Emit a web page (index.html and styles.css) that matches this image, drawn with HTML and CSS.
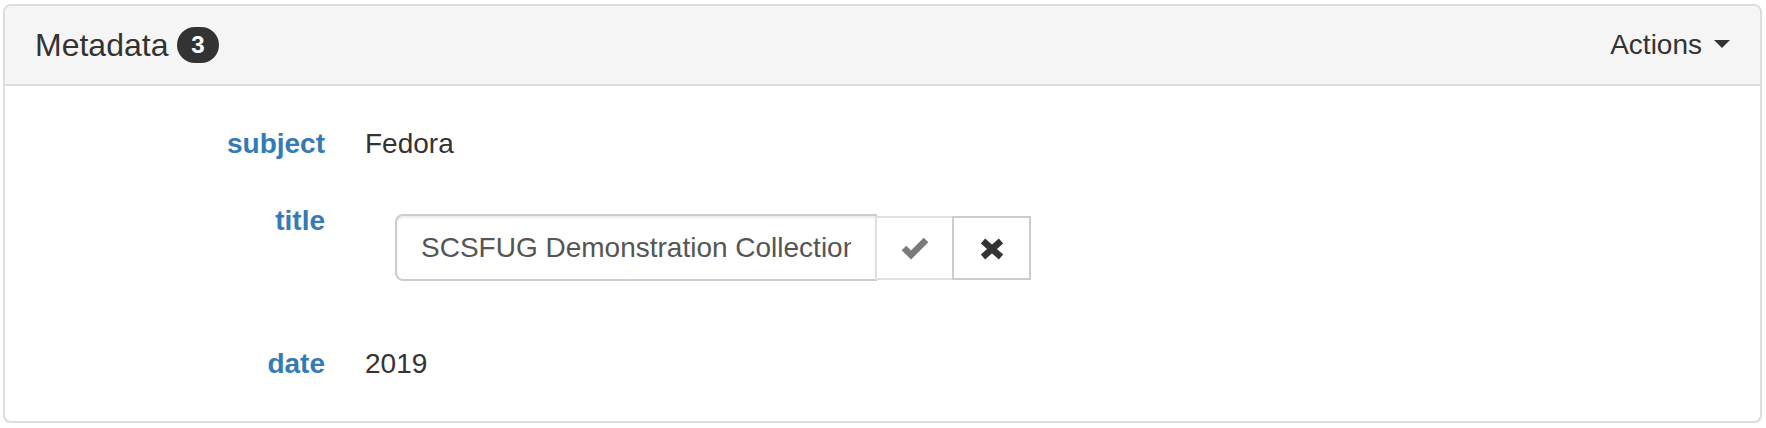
FILE: index.html
```html
<!DOCTYPE html>
<html lang="en">
<head>
<meta charset="utf-8">
<title>Metadata</title>
<link rel="stylesheet" href="styles.css">
</head>
<body>
<div class="panel">
  <div class="panel-heading">
    <h3 class="panel-title">Metadata <span class="badge">3</span></h3>
    <div class="actions">Actions<span class="caret"></span></div>
  </div>
  <div class="panel-body">
    <div class="row row-subject">
      <div class="term">subject</div>
      <div class="desc">Fedora</div>
    </div>
    <div class="row row-title">
      <div class="term">title</div>
      <div class="desc">
        <form class="edit-form">
          <input class="text-input" type="text" value="SCSFUG Demonstration Collection">
          <button class="btn btn-ok" type="button" disabled aria-label="Save">
            <svg class="icon-ok" viewBox="0 0 28 23" width="28" height="23"><polyline points="3,11 10,18 25,3" fill="none" stroke="#7a7a7a" stroke-width="6.5" stroke-linejoin="miter" stroke-linecap="butt"/></svg>
          </button>
          <button class="btn btn-remove" type="button" aria-label="Cancel">
            <svg class="icon-remove" viewBox="0 0 24 22" width="24" height="22"><path d="M3 3 L21 19 M21 3 L3 19" fill="none" stroke="#333" stroke-width="6.5" stroke-linecap="butt"/></svg>
          </button>
        </form>
      </div>
    </div>
    <div class="row row-date">
      <div class="term">date</div>
      <div class="desc">2019</div>
    </div>
  </div>
</div>
</body>
</html>
```

FILE: styles.css
```css
html, body {
  margin: 0;
  padding: 0;
  background: #fff;
}

body {
  font-family: "Liberation Sans", Arial, Helvetica, sans-serif;
  font-size: 28px;
  line-height: 40px;
  color: #333;
}

.panel {
  margin: 4px 4px 0 3px;
  border: 2px solid #ddd;
  border-radius: 8px;
  background: #fff;
  box-shadow: 0 2px 2px rgba(0, 0, 0, 0.05);
}

.panel-heading {
  display: flex;
  align-items: center;
  justify-content: space-between;
  height: 78px;
  padding: 0 30px;
  background: #f5f5f5;
  border-bottom: 2px solid #ddd;
  border-radius: 6px 6px 0 0;
}

.panel-title {
  margin: 0;
  font-size: 32px;
  line-height: 36px;
  font-weight: normal;
  color: #333;
}

.badge {
  display: inline-block;
  vertical-align: middle;
  padding: 6px 14px;
  font-size: 24px;
  line-height: 24px;
  font-weight: bold;
  color: #fff;
  background: #333;
  border-radius: 20px;
  margin-top: -4px;
}

.actions {
  font-size: 28px;
  line-height: 40px;
  color: #333;
}

.caret {
  display: inline-block;
  width: 0;
  height: 0;
  margin-left: 12px;
  vertical-align: 6px;
  border-top: 8px solid #333;
  border-left: 8px solid transparent;
  border-right: 8px solid transparent;
}

.panel-body {
  padding: 38px 0 37px 0;
}

.row {
  display: flex;
  align-items: flex-start;
}

.row-title {
  margin-top: 37px;
}

.row-date {
  margin-top: 63px;
}

.term {
  width: 320px;
  flex: none;
  text-align: right;
  font-weight: bold;
  color: #337ab7;
}

.desc {
  margin-left: 40px;
}

.edit-form {
  display: flex;
  align-items: center;
  margin: 13px 0 0 30px;
}

.text-input {
  box-sizing: border-box;
  width: 482px;
  height: 67px;
  padding: 0 24px;
  margin: 0;
  font-family: "Liberation Sans", Arial, Helvetica, sans-serif;
  font-size: 28px;
  color: #555;
  background: #fff;
  border: 2px solid #ccc;
  border-radius: 8px 0 0 8px;
  box-shadow: inset 0 2px 2px rgba(0, 0, 0, 0.075);
  outline: none;
}

.btn {
  box-sizing: border-box;
  display: flex;
  align-items: center;
  justify-content: center;
  width: 79px;
  height: 64px;
  margin: 0 0 0 -2px;
  padding: 0;
  background: #fff;
  border: 2px solid #ccc;
  border-radius: 0;
}

.btn-ok {
  border-color: #e0e0e0;
  cursor: not-allowed;
}

.btn-remove {
  border-color: #ccc;
}

.icon-ok {
  display: block;
  margin-top: 2px;
}

.icon-remove {
  display: block;
  margin-top: 2px;
}
```
